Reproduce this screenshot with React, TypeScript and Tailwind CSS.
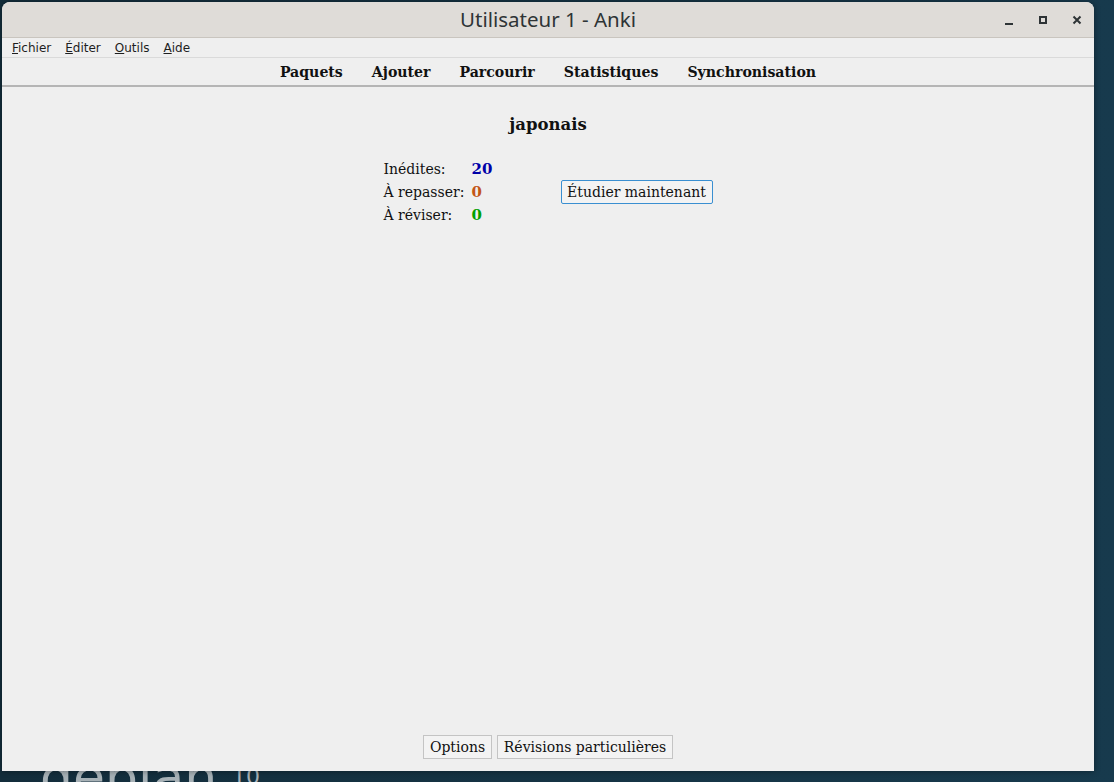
import React from "react";

const serif = { fontFamily: '"DejaVu Serif", serif' };
const sans = { fontFamily: '"DejaVu Sans", sans-serif' };

export default function App() {
  return (
    <div className="relative w-[1114px] h-[782px] overflow-hidden bg-gradient-to-r from-[#132d3b] to-[#173a4d]">
      {/* wallpaper logo */}
      <div
        className="absolute left-[40px] top-[751px] text-[52px] leading-none text-[#a7b1b6]"
        style={sans}
      >
        debian
      </div>
      <div className="absolute left-[232px] top-[766px] text-[22px] leading-none text-[#a7b1b6]" style={sans}>
        10
      </div>

      <div className="absolute left-[2px] top-[2px] w-[1092px] h-[769px] flex flex-col bg-[#efefef] rounded-t-[8px] overflow-hidden shadow-[0_0_6px_rgba(0,0,0,0.4)]">
        {/* title bar */}
        <div className="relative h-[36px] shrink-0 bg-[#dfdcd8] border-b border-[#c9c5bf] flex items-center justify-center">
          <span className="text-[20.5px] text-[#2e3436]" style={{ fontFamily: '"Noto Sans", sans-serif' }}>
            Utilisateur 1 - Anki
          </span>
          <div className="absolute right-0 top-0 h-full flex items-center">
            <div className="w-[34px] flex justify-center">
              <div className="w-[8px] h-[2px] bg-[#2e3436] mt-[8px]" />
            </div>
            <div className="w-[34px] flex justify-center">
              <div className="w-[8px] h-[8px] border-2 border-[#2e3436]" />
            </div>
            <div className="w-[34px] flex justify-center">
              <svg width="10" height="10" viewBox="0 0 10 10">
                <path d="M1.5 1.5 L8.5 8.5 M8.5 1.5 L1.5 8.5" stroke="#2e3436" strokeWidth="2" />
              </svg>
            </div>
          </div>
        </div>

        {/* menu bar */}
        <div className="h-[20px] shrink-0 flex items-center gap-[14px] pl-[10px] text-[12px] text-[#1e1e1e] border-b border-[#dadada]" style={sans}>
          <span><u>F</u>ichier</span>
          <span><u>É</u>diter</span>
          <span><u>O</u>utils</span>
          <span><u>A</u>ide</span>
        </div>

        {/* toolbar */}
        <div
          className="h-[29px] shrink-0 flex items-center justify-center gap-[29px] border-b-2 border-[#b5b5b5] text-[15.7px] font-bold text-[#111] pt-[1px]"
          style={{ fontFamily: '"DejaVu Serif", serif', fontStretch: "condensed" }}
        >
          <span>Paquets</span>
          <span>Ajouter</span>
          <span>Parcourir</span>
          <span>Statistiques</span>
          <span>Synchronisation</span>
        </div>

        {/* content */}
        <div className="flex-1 flex flex-col items-center" style={serif}>
          <div className="mt-[26px] text-[16.5px] font-bold text-[#111]">japonais</div>
          <div className="mt-[20px] flex items-center">
            <div className="flex flex-col text-[14px] text-[#111] leading-[23px]">
              <div className="flex">
                <span className="w-[88px]">Inédites:</span>
                <span className="w-[89px] font-bold text-[15px] text-[#0000a8]">20</span>
              </div>
              <div className="flex">
                <span className="w-[88px]">À repasser:</span>
                <span className="w-[89px] font-bold text-[15px] text-[#c35617]">0</span>
              </div>
              <div className="flex">
                <span className="w-[88px]">À réviser:</span>
                <span className="w-[89px] font-bold text-[15px] text-[#00a000]">0</span>
              </div>
            </div>
            <button className="w-[152px] h-[24px] border border-[#3a8fd1] rounded-[2px] bg-[#f3f3f3] text-[14px] text-[#111]" style={serif}>
              Étudier maintenant
            </button>
          </div>
          <div className="flex-1" />
          <div className="mb-[12px] flex gap-[5px]">
            <button className="w-[69px] h-[24px] border border-[#c4c4c4] bg-[#f3f3f3] text-[14px] text-[#111]" style={serif}>
              Options
            </button>
            <button className="w-[176px] h-[24px] border border-[#c4c4c4] bg-[#f3f3f3] text-[14px] text-[#111]" style={serif}>
              Révisions particulières
            </button>
          </div>
        </div>
      </div>
    </div>
  );
}
